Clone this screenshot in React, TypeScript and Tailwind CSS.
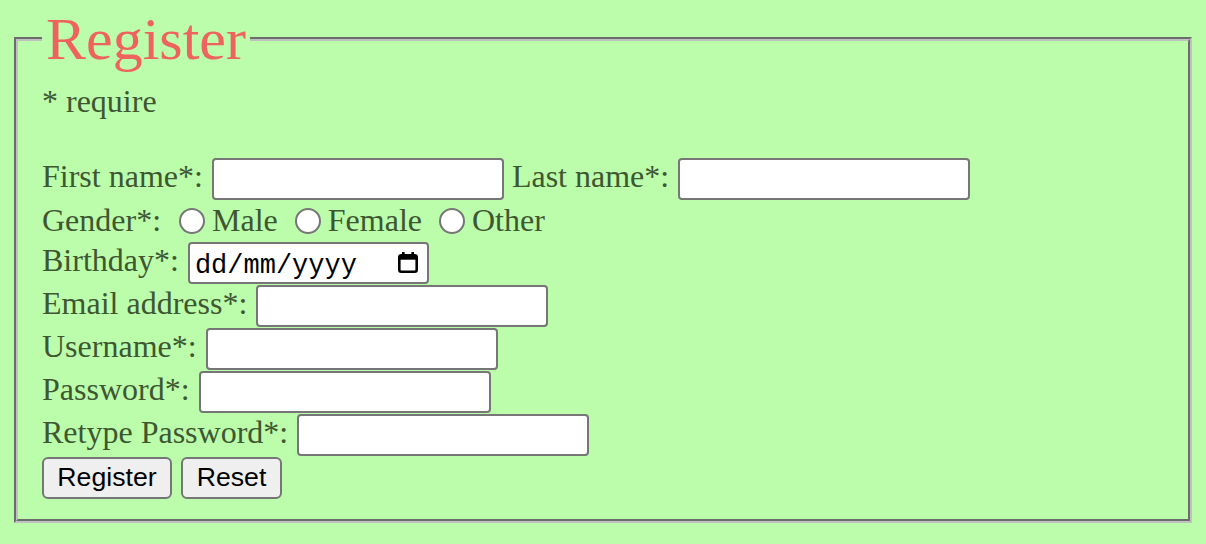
import React from "react";

// text inputs all share the same box
const field = "ml-[9px] h-[42px] w-[292px] rounded-[4px] border-2 border-[#767676] bg-white outline-none";

const InputRow: React.FC<{ label: string; children: React.ReactNode }> = ({ label, children }) => (
  <div className="flex h-[43px] items-center">
    <span className="mb-[4px] whitespace-pre">{label}</span>
    {children}
  </div>
);

const Radio: React.FC<{ label: string; first?: boolean }> = ({ label, first }) => (
  <label className={first ? "ml-[18px] flex items-center" : "ml-[17px] flex items-center"}>
    <input
      type="radio"
      name="gender"
      className="h-[26px] w-[26px] appearance-none rounded-full border-2 border-[#767676] bg-white"
    />
    <span className="ml-[7px]">{label}</span>
  </label>
);

const CalendarIcon: React.FC = () => (
  <svg width="20" height="21" viewBox="0 0 20 21" fill="none">
    <rect x="4" y="0" width="2.6" height="4" fill="#000" />
    <rect x="13.4" y="0" width="2.6" height="4" fill="#000" />
    <rect x="1.3" y="3.3" width="17.4" height="16.4" rx="2" stroke="#000" strokeWidth="2.6" />
    <rect x="1.3" y="3.3" width="17.4" height="4.4" fill="#000" />
  </svg>
);

const App: React.FC = () => {
  return (
    <div className="min-h-[544px] w-full bg-[#bbfdaa] px-[14px] pt-[6px] font-['Liberation_Serif','Times_New_Roman',serif] text-[32px] text-[#3e5631]">
      <fieldset className="m-0 border-4 border-[#c0c0c0] px-[24px] pb-[20px] pt-0 [border-style:groove]">
        <legend className="px-[4px] text-[60px] leading-[66px] text-[#ee635e]">Register</legend>

        <p className="mt-[11px] leading-[37px]">* require</p>

        <form className="mt-[37px] leading-[37px]" onSubmit={(e) => e.preventDefault()}>
          <InputRow label="First name*:">
            <input type="text" className={field} />
            <span className="mb-[4px] ml-[8px]">Last name*:</span>
            <input type="text" className={field} />
          </InputRow>

          <div className="flex h-[41px] items-center">
            <span>Gender*:</span>
            <Radio label="Male" first />
            <Radio label="Female" />
            <Radio label="Other" />
          </div>

          <InputRow label="Birthday*:">
            <div className="ml-[9px] flex h-[42px] w-[241px] items-center justify-between rounded-[4px] border-2 border-[#767676] bg-white pl-[5px] pr-[9px]">
              <span className="pt-[6px] font-['Liberation_Mono','Courier_New',monospace] text-[27px] leading-[30px] text-black">
                dd/mm/yyyy
              </span>
              <CalendarIcon />
            </div>
          </InputRow>

          <InputRow label="Email address*:">
            <input type="email" className={field} />
          </InputRow>

          <InputRow label="Username*:">
            <input type="text" className={field} />
          </InputRow>

          <InputRow label="Password*:">
            <input type="password" className={field} />
          </InputRow>

          <InputRow label="Retype Password*:">
            <input type="password" className={field} />
          </InputRow>

          <div className="flex h-[43px] items-center gap-[9px] font-['Liberation_Sans',Arial,sans-serif] text-[26.67px] text-black">
            <button type="submit" className="h-[42px] w-[130px] rounded-[6px] border-2 border-[#767676] bg-[#efefef] leading-none">
              Register
            </button>
            <button type="reset" className="h-[42px] w-[101px] rounded-[6px] border-2 border-[#767676] bg-[#efefef] leading-none">
              Reset
            </button>
          </div>
        </form>
      </fieldset>
    </div>
  );
};

export default App;
